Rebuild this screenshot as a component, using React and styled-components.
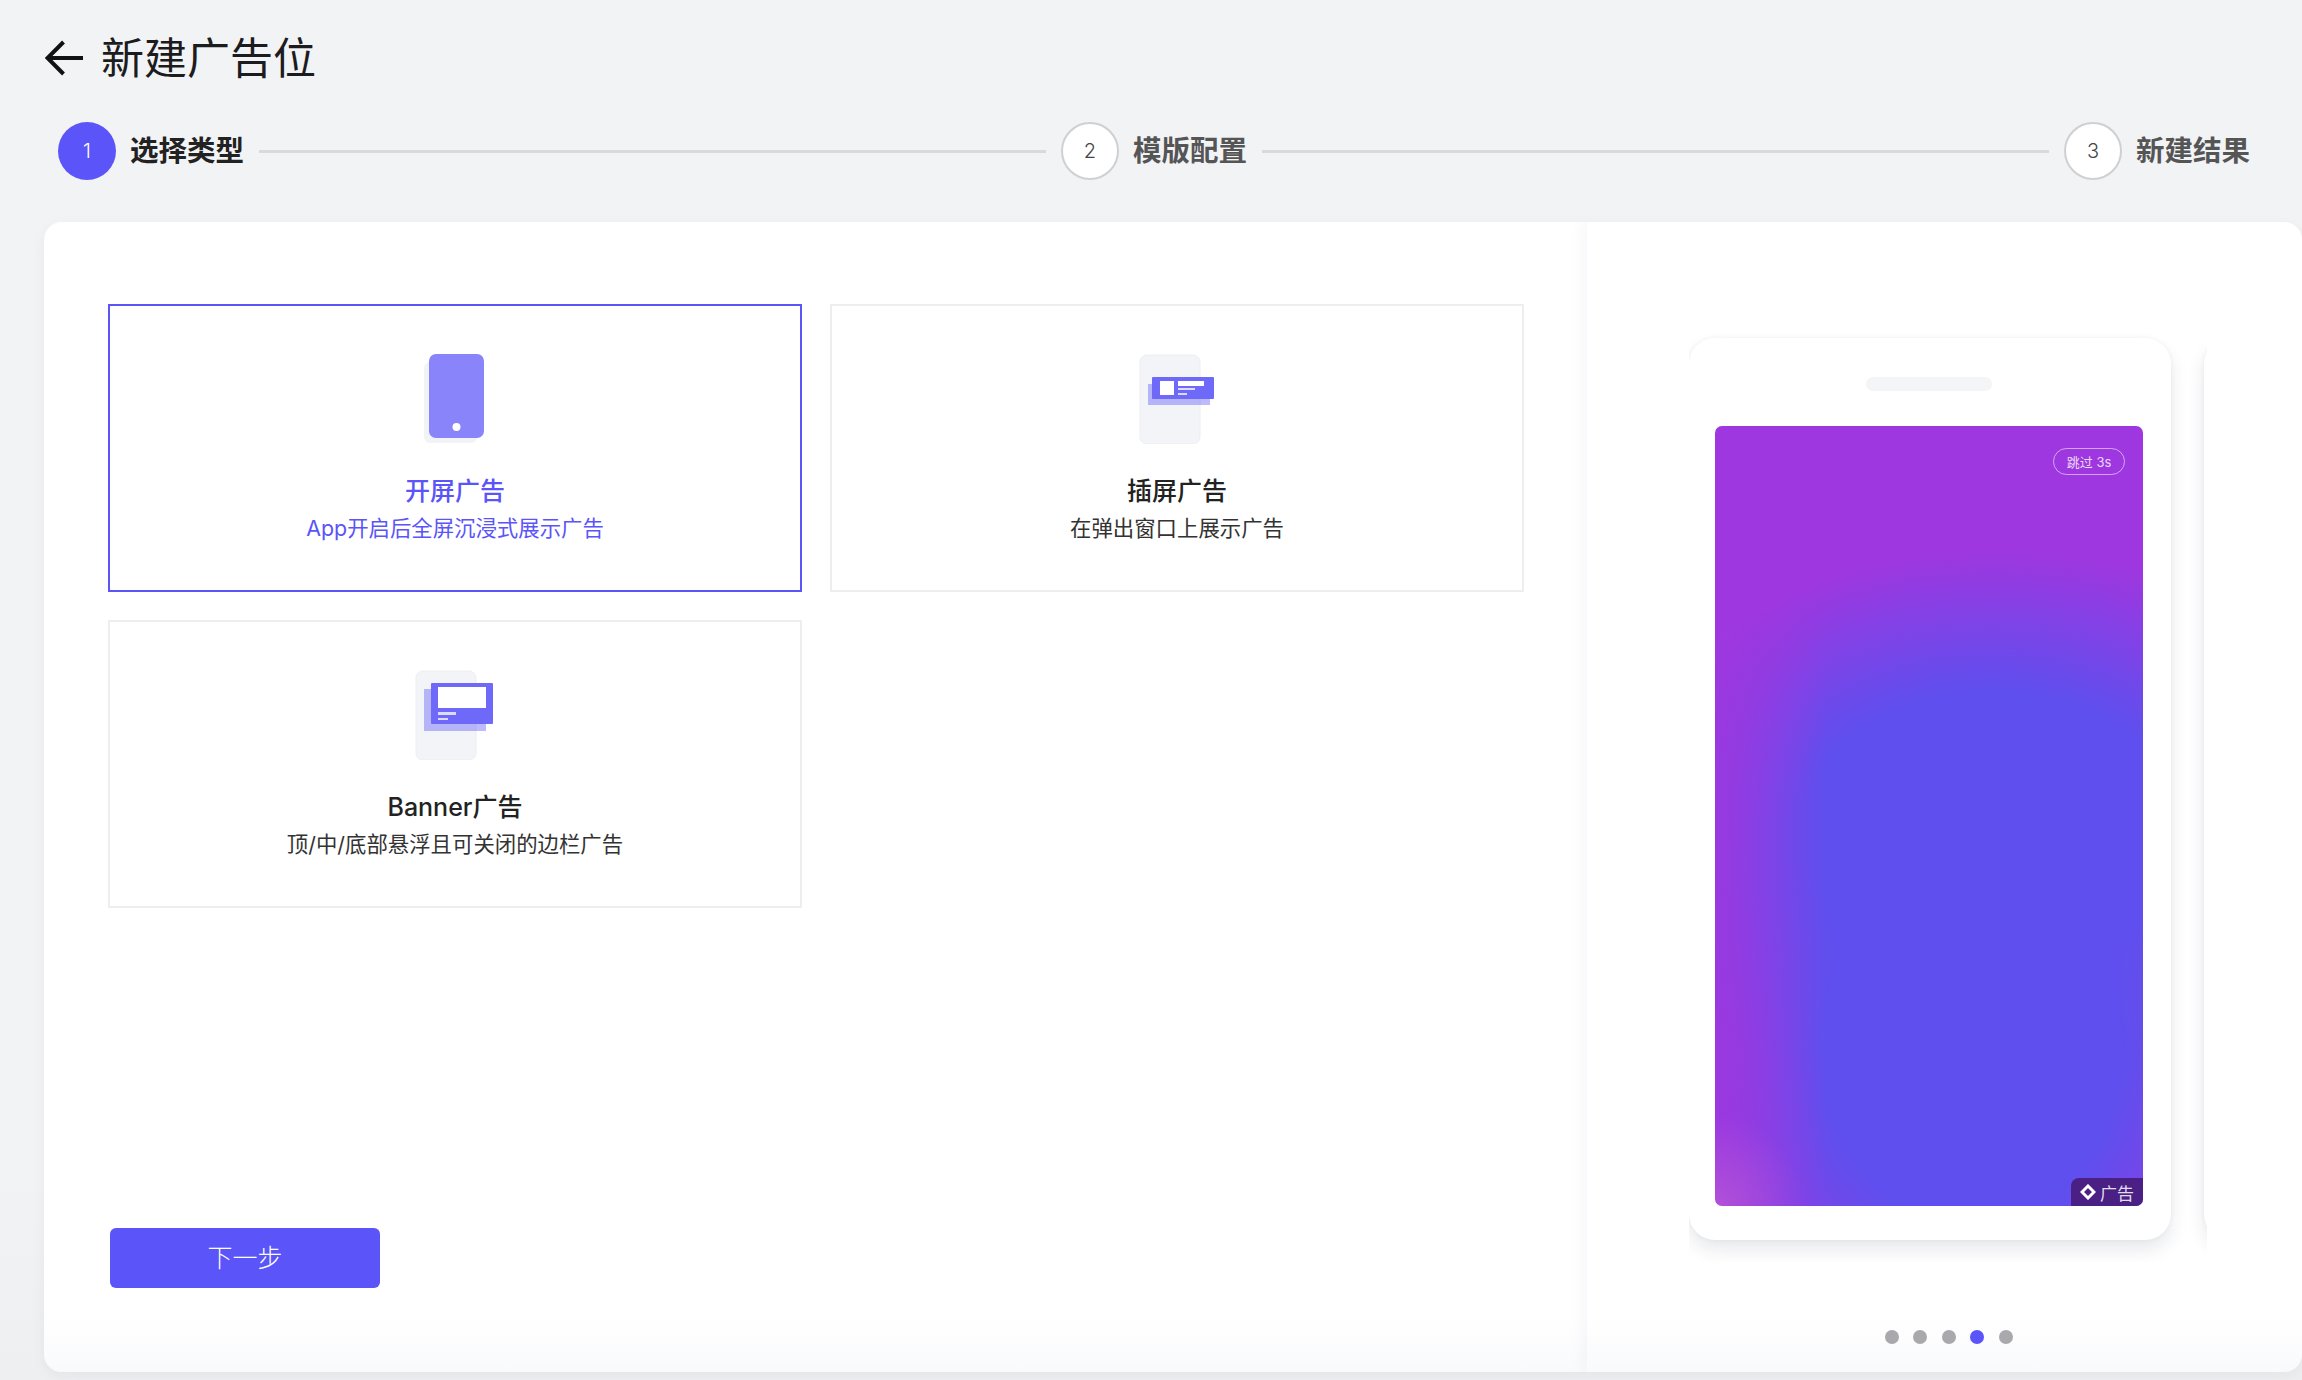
import React from 'react';
import styled, { createGlobalStyle } from 'styled-components';

const GlobalStyle = createGlobalStyle`
  html, body {
    margin: 0;
    padding: 0;
    width: 2302px;
    height: 1380px;
    overflow: hidden;
    background: #f2f3f5;
    font-family: Inter, "Noto Sans CJK SC", sans-serif;
  }
  * { box-sizing: border-box; }
`;

const Page = styled.div`
  width: 2302px;
  height: 1380px;
  display: flex;
  flex-direction: column;
  background: linear-gradient(to bottom, #f2f3f5 85%, #eeeff1 100%);
`;

const Header = styled.div`
  display: flex;
  align-items: center;
  gap: 18px;
  height: 40px;
  margin: 38px 0 0 45px;
`;

const BackIcon = styled.svg`
  width: 38px;
  height: 38px;
  flex: none;
`;

const Title = styled.h1`
  margin: 0;
  font-size: 43px;
  line-height: 40px;
  font-weight: 400;
  color: #1c1c1e;
`;

const Steps = styled.div`
  display: flex;
  align-items: center;
  height: 58px;
  margin: 44px 52px 0 58px;
`;

const StepCircle = styled.div`
  width: 58px;
  height: 58px;
  flex: none;
  display: flex;
  align-items: center;
  justify-content: center;
  border-radius: 50%;
  font-size: 20px;
  font-weight: 300;
  color: ${p => (p.$active ? '#fff' : '#444')};
  background: ${p => (p.$active ? '#5a54f9' : '#fff')};
  border: ${p => (p.$active ? 'none' : '2px solid #cfd0d3')};
`;

const StepLabel = styled.div`
  margin-left: 14px;
  flex: none;
  font-size: 28.5px;
  line-height: 58px;
  font-weight: 600;
  color: ${p => (p.$active ? '#222' : '#555')};
`;

const StepLine = styled.div`
  flex: 1;
  height: 3px;
  margin: 0 15px;
  background: #d9dadd;
`;

const Card = styled.div`
  display: flex;
  width: 2258px;
  height: 1150px;
  margin: 42px 0 0 44px;
  border-radius: 18px;
  overflow: hidden;
  background: linear-gradient(to bottom, #fff 95%, #f9fafc 100%);
  box-shadow: 0 4px 14px rgba(30, 35, 60, 0.05);
`;

const LeftPanel = styled.div`
  width: 1543px;
  flex: none;
  display: flex;
  flex-direction: column;
  padding: 82px 63px 84px 64px;
`;

const OptionGrid = styled.div`
  display: grid;
  grid-template-columns: 694px 694px;
  grid-template-rows: 288px 288px;
  gap: 28px;
`;

const Option = styled.div`
  display: flex;
  flex-direction: column;
  align-items: center;
  padding-top: 48px;
  border: 2px solid ${p => (p.$active ? '#5a54f9' : '#eeeef1')};
`;

const OptionIcon = styled.svg`
  width: 90px;
  height: 90px;
  flex: none;
`;

const OptionTitle = styled.div`
  margin-top: 30px;
  font-size: 25px;
  line-height: 34px;
  font-weight: 500;
  color: ${p => (p.$active ? '#5a54f9' : '#222')};
`;

const OptionDesc = styled.div`
  margin-top: 4px;
  font-size: 21.4px;
  line-height: 32px;
  color: ${p => (p.$active ? '#5a54f9' : '#333')};
`;

const NextButton = styled.button`
  width: 270px;
  height: 60px;
  margin: auto 0 0 2px;
  padding: 0 0 5px;
  border: none;
  border-radius: 6px;
  background: #5a54f9;
  color: #fff;
  font-family: inherit;
  font-size: 25px;
  font-weight: 300;
  cursor: pointer;
`;

const RightPanel = styled.div`
  flex: 1;
  display: flex;
  flex-direction: column;
  padding-top: 108px;
  box-shadow: -6px 0 14px rgba(30, 40, 90, 0.03);
`;

const Viewport = styled.div`
  display: flex;
  gap: 33px;
  width: 518px;
  height: 932px;
  margin-left: 102px;
  padding-top: 8px;
  overflow: hidden;
`;

const Phone = styled.div`
  width: 482px;
  height: 902px;
  flex: none;
  display: flex;
  flex-direction: column;
  align-items: center;
  padding: 39px 2px 0 0;
  border-radius: 26px;
  background: #fff;
  box-shadow: 0 10px 18px rgba(30, 35, 70, 0.1), 0 0 5px rgba(30, 40, 90, 0.05);
`;

const Notch = styled.div`
  width: 126px;
  height: 14px;
  border-radius: 7px;
  background: #f4f5f7;
`;

const Screen = styled.div`
  position: relative;
  width: 428px;
  height: 780px;
  margin-top: 35px;
  border-radius: 7px;
  overflow: hidden;
  background:
    radial-gradient(circle 90px at 0% 100%, rgba(196, 105, 210, 0.5), rgba(196, 105, 210, 0) 100%),
    linear-gradient(to right, rgba(158, 55, 223, 0.85) 0%, rgba(158, 55, 223, 0) 26%),
    radial-gradient(ellipse 90% 36% at 65% 52%, #5f4fee 0%, #5f4fee 50%, rgba(95, 79, 238, 0) 100%),
    radial-gradient(ellipse 70% 45% at 60% 80%, #5f4fee 0%, #5f4fee 50%, rgba(95, 79, 238, 0) 100%),
    #9e37df;
`;

const SkipPill = styled.div`
  position: absolute;
  top: 22px;
  right: 18px;
  width: 72px;
  height: 27px;
  display: flex;
  align-items: center;
  justify-content: center;
  border: 1px solid rgba(255, 255, 255, 0.55);
  border-radius: 14px;
  font-size: 13px;
  color: rgba(255, 255, 255, 0.82);
`;

const AdBadge = styled.div`
  position: absolute;
  right: 0;
  bottom: 0;
  width: 72px;
  height: 28px;
  display: flex;
  align-items: center;
  justify-content: center;
  gap: 4px;
  border-top-left-radius: 8px;
  background: #4a2085;
  font-size: 17px;
  color: rgba(255, 255, 255, 0.85);
`;

const Dots = styled.div`
  display: flex;
  justify-content: center;
  gap: 14.5px;
  margin: 68px 0 0 8px;
`;

const Dot = styled.span`
  width: 14px;
  height: 14px;
  border-radius: 50%;
  background: ${p => (p.$active ? '#5a54f9' : '#a9a9ad')};
`;

const SplashIcon = () => (
  <OptionIcon viewBox="0 0 90 90">
    <rect x="14" y="8" width="53" height="81" rx="6" fill="#f2f3f7" />
    <rect x="19" y="0" width="55" height="84" rx="7" fill="#8a84fb" />
    <circle cx="46.5" cy="73" r="4" fill="#fff" />
  </OptionIcon>
);

const InterstitialIcon = () => (
  <OptionIcon viewBox="0 0 90 90">
    <rect x="8" y="1" width="60" height="89" rx="7" fill="#f3f4f7" stroke="#eceef3" />
    <rect x="16" y="30" width="62" height="21" fill="#5a54f9" opacity="0.4" />
    <rect x="20" y="23" width="62" height="22" rx="1" fill="#6f69fa" />
    <rect x="28" y="27" width="14" height="14" fill="#fff" />
    <rect x="46" y="27" width="26" height="5" fill="#fff" />
    <rect x="46" y="34" width="17" height="2" fill="#dcdafe" />
    <rect x="46" y="39" width="9" height="2" fill="#dcdafe" />
  </OptionIcon>
);

const BannerIcon = () => (
  <OptionIcon viewBox="0 0 90 90">
    <rect x="6" y="1" width="60" height="89" rx="7" fill="#f3f4f7" stroke="#eceef3" />
    <rect x="14" y="19" width="62" height="42" fill="#5a54f9" opacity="0.4" />
    <rect x="21" y="13" width="62" height="41" rx="1" fill="#6f69fa" />
    <rect x="28" y="17" width="48" height="21" fill="#fff" />
    <rect x="28" y="42" width="18" height="3" fill="#dcdafe" />
    <rect x="28" y="48" width="10" height="2" fill="#dcdafe" />
  </OptionIcon>
);

const options = [
  { title: '开屏广告', desc: 'App开启后全屏沉浸式展示广告', Icon: SplashIcon, active: true },
  { title: '插屏广告', desc: '在弹出窗口上展示广告', Icon: InterstitialIcon },
  { title: 'Banner广告', desc: '顶/中/底部悬浮且可关闭的边栏广告', Icon: BannerIcon },
];

const steps = [
  { n: 1, label: '选择类型', active: true },
  { n: 2, label: '模版配置' },
  { n: 3, label: '新建结果' },
];

export default function App() {
  return (
    <Page>
      <GlobalStyle />
      <Header>
        <BackIcon viewBox="0 0 38 38">
          <path d="M38 19H3M18.5 3 2.5 19l16 16" fill="none" stroke="#111" strokeWidth="4" />
        </BackIcon>
        <Title>新建广告位</Title>
      </Header>

      <Steps>
        {steps.map((s, i) => (
          <React.Fragment key={s.n}>
            <StepCircle $active={s.active}>{s.n}</StepCircle>
            <StepLabel $active={s.active}>{s.label}</StepLabel>
            {i < steps.length - 1 && <StepLine />}
          </React.Fragment>
        ))}
      </Steps>

      <Card>
        <LeftPanel>
          <OptionGrid>
            {options.map(o => (
              <Option key={o.title} $active={o.active}>
                <o.Icon />
                <OptionTitle $active={o.active}>{o.title}</OptionTitle>
                <OptionDesc $active={o.active}>{o.desc}</OptionDesc>
              </Option>
            ))}
          </OptionGrid>
          <NextButton>下一步</NextButton>
        </LeftPanel>

        <RightPanel>
          <Viewport>
            <Phone>
              <Notch />
              <Screen>
                <SkipPill>跳过 3s</SkipPill>
                <AdBadge>
                  <svg width="16" height="16" viewBox="0 0 16 16">
                    <path d="M8 2 14 8 8 14 2 8Z" fill="none" stroke="#fff" strokeWidth="3" />
                  </svg>
                  广告
                </AdBadge>
              </Screen>
            </Phone>
            <Phone />
          </Viewport>
          <Dots>
            {[0, 1, 2, 3, 4].map(i => (
              <Dot key={i} $active={i === 3} />
            ))}
          </Dots>
        </RightPanel>
      </Card>
    </Page>
  );
}
